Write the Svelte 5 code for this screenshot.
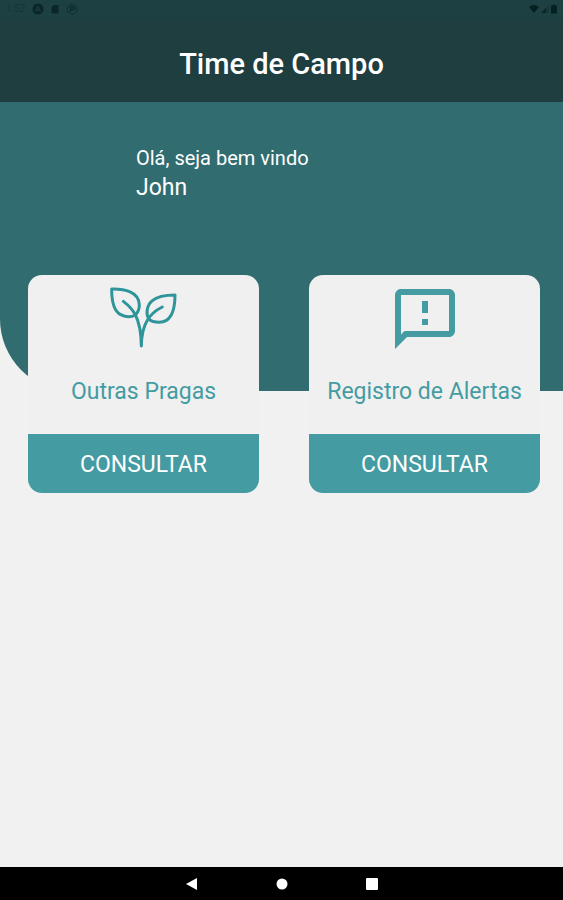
<script>
  const cards = [
    { icon: 'plant', label: 'Outras Pragas' },
    { icon: 'alert', label: 'Registro de Alertas' }
  ];
</script>

<div class="screen">
  <header>
    <div class="status">
      <div class="group">
        <span class="clock">1:52</span>
        <svg width="12" height="12" viewBox="0 0 12 12">
          <circle cx="6" cy="6" r="5.5" fill="#0a2628" />
          <path d="M3.5 8.5L6 3.5L8.500 8.500M4.500 7H7.500" fill="none" stroke="#1d3e40" stroke-width="1.2" />
        </svg>
        <svg width="12" height="12" viewBox="0 0 12 12">
          <path d="M5 2H9.500V10.500H2.500V4.500Z" fill="#0a2628" />
        </svg>
        <svg width="12" height="12" viewBox="0 0 12 12">
          <circle cx="6" cy="6" r="5" fill="none" stroke="#0d2b2d" stroke-dasharray="4 1" />
          <path d="M4.500 9V3.500H7A1.500 1.500 0 0 1 7 6.500H4.500" fill="none" stroke="#0d2b2d" stroke-width="1.300" />
        </svg>
      </div>
      <div class="group end">
        <svg width="12" height="12" viewBox="0 0 12 12"><path d="M1 4Q6 0 11 4L6 10Z" fill="#06201f" /></svg>
        <svg width="10" height="12" viewBox="0 0 10 12">
          <path d="M1 10L9 2V10Z" fill="#17383a" /><path d="M1 10L6 5V10Z" fill="#0a2628" />
        </svg>
        <svg width="8" height="12" viewBox="0 0 8 12"><path d="M1 2.500H3V1.500H5V2.500H7V10.500H1Z" fill="#06201f" /></svg>
      </div>
    </div>
    <h1>Time de Campo</h1>
  </header>

  <section class="hero">
    <p class="greeting">Olá, seja bem vindo</p>
    <p class="name">John</p>
  </section>

  <main>
    {#each cards as card}
      <article>
        <div class="body">
          {#if card.icon === 'plant'}
            <svg class="icon plant" viewBox="2 -6 216 216">
              <path d="M13 12C50 11 96 20 96 60C96 73 92 82 84 90C72 97 54 96 40 89C18 78 13 42 13 12Z" />
              <path d="M203 30C203 66 195 111 156 112C141 112 129 108 124 101C115 86 118 61 135 47C150 34 175 30 203 30Z" />
              <path d="M48 49C73 68 101 93 102 183C103 115 128 84 165 66" />
            </svg>
          {:else}
            <svg class="icon" viewBox="0 0 24 24">
              <path
                fill="currentColor"
                d="M20 2H4c-1.1 0-1.990.9-1.990 2L2 22l4-4h14c1.1 0 2-.9 2-2V4c0-1.1-.9-2-2-2zm0 14H5.170l-.59.590-.58.580V4h16v12zm-9-4h2v2h-2zm0-6h2v4h-2z"
              />
            </svg>
          {/if}
          <h2>{card.label}</h2>
        </div>
        <button type="button">CONSULTAR</button>
      </article>
    {/each}
  </main>

  <nav>
    <button type="button" aria-label="Voltar">
      <svg width="14" height="14" viewBox="0 0 14 14"><path d="M1 7L12 1V13Z" fill="#fff" /></svg>
    </button>
    <button type="button" aria-label="Início">
      <svg width="14" height="14" viewBox="0 0 14 14"><circle cx="7" cy="7" r="5.500" fill="#fff" /></svg>
    </button>
    <button type="button" aria-label="Recentes">
      <svg width="14" height="14" viewBox="0 0 14 14"><rect x="1" y="1" width="12" height="12" rx="1" fill="#fff" /></svg>
    </button>
  </nav>
</div>

<style>
  :global(body) {
    margin: 0;
  }
  .screen {
    min-height: 100vh;
    display: flex;
    flex-direction: column;
    background: #f1f1f1;
    font-family: Roboto, 'Liberation Sans', sans-serif;
  }
  h1,
  h2,
  p {
    margin: 0;
    font-weight: 400;
  }
  svg {
    display: block;
  }
  header {
    background: #1e3e40;
    color: #fff;
    padding-bottom: 18px;
  }
  .status {
    display: flex;
    justify-content: space-between;
    align-items: center;
    height: 18px;
    padding: 0 5px 0 6px;
    background: #1d4143;
  }
  .group {
    display: flex;
    align-items: center;
    gap: 5px;
  }
  .end {
    gap: 0;
  }
  .clock {
    width: 21px;
    font-size: 10px;
    line-height: 12px;
    color: #153537;
  }
  h1 {
    padding-top: 26px;
    text-align: center;
    font-size: 29px;
    font-weight: 500;
    line-height: 40px;
  }
  .hero {
    box-sizing: border-box;
    min-height: 289px;
    padding: 42px 24px 0 136px;
    background: #316c70;
    border-bottom-left-radius: 72px;
    color: #fff;
  }
  .greeting {
    font-size: 20px;
    line-height: 28px;
  }
  .name {
    font-size: 23px;
    line-height: 32px;
  }
  main {
    flex: 1;
    display: grid;
    grid-template-columns: 1fr 1fr;
    align-items: start;
    gap: 50px;
    margin-top: -116px;
    padding: 0 23px 24px 28px;
  }
  article {
    border-radius: 14px;
    overflow: hidden;
    background: #f0f0f0;
  }
  .body {
    display: flex;
    flex-direction: column;
    align-items: center;
    gap: 21px;
    padding: 8px 8px 26px;
    color: #449ca2;
  }
  .icon {
    width: 72px;
    height: 72px;
  }
  .plant {
    fill: none;
    stroke: #2f959b;
    stroke-width: 9px;
    stroke-linejoin: round;
    stroke-linecap: round;
  }
  h2 {
    font-size: 23px;
    line-height: 32px;
    text-align: center;
  }
  article button {
    display: block;
    width: 100%;
    height: 59px;
    padding: 2px 0 0;
    border: 0;
    background: #449ba1;
    color: #fff;
    font-family: inherit;
    font-size: 23px;
  }
  nav {
    display: flex;
    justify-content: center;
    gap: 50px;
    height: 33px;
    background: #000;
  }
  nav button {
    display: grid;
    place-items: center;
    width: 40px;
    padding: 0;
    border: 0;
    background: none;
  }
</style>
